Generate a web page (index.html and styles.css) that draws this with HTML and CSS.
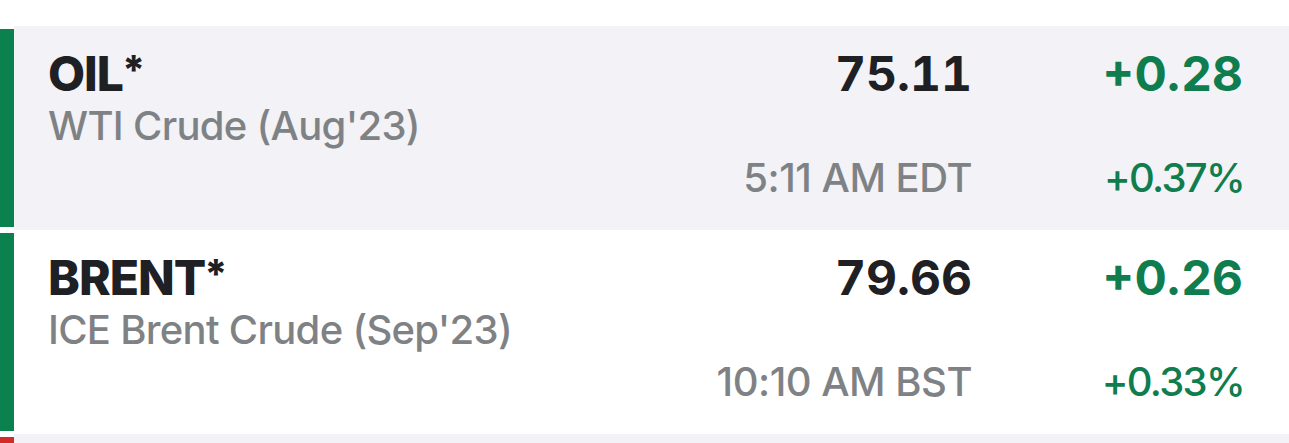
FILE: index.html
```html
<!DOCTYPE html>
<html>
<head>
<meta charset="utf-8">
<link rel="stylesheet" href="styles.css">
</head>
<body>
<div class="list">
  <div class="row row-alt">
    <div class="bar bar-up"></div>
    <div class="cell-name">
      <div class="symbol">OIL<span class="star">*</span></div>
      <div class="desc">WTI Crude (Aug'23)</div>
    </div>
    <div class="cell-price">
      <div class="price">75.11</div>
      <div class="time">5:11 AM EDT</div>
    </div>
    <div class="cell-change">
      <div class="change up">+0.28</div>
      <div class="pct up">+0.37%</div>
    </div>
  </div>
  <div class="row">
    <div class="bar bar-up"></div>
    <div class="cell-name">
      <div class="symbol">BRENT<span class="star">*</span></div>
      <div class="desc">ICE Brent Crude (Sep'23)</div>
    </div>
    <div class="cell-price">
      <div class="price">79.66</div>
      <div class="time">10:10 AM BST</div>
    </div>
    <div class="cell-change">
      <div class="change up">+0.26</div>
      <div class="pct up">+0.33%</div>
    </div>
  </div>
  <div class="row row-alt row-peek">
    <div class="bar bar-down"></div>
  </div>
</div>
</body>
</html>
```
FILE: styles.css
```css
html, body {
  margin: 0;
  padding: 0;
  background: #ffffff;
  overflow: hidden;
}
body {
  font-family: "Inter", "Liberation Sans", sans-serif;
  width: 1289px;
  height: 443px;
}
.list {
  padding-top: 26px;
  height: 417px;
  overflow: hidden;
}
.row {
  display: flex;
  height: 204px;
  background: #ffffff;
}
.row-peek {
  height: 9px;
}
.row-alt {
  background: linear-gradient(to right, #ffffff 14px, #f2f2f7 14px);
}
.bar {
  width: 14px;
  flex: none;
  margin: 3px 0;
}
.row-peek .bar {
  margin-bottom: 0;
}
.bar-up { background: #0b8150; }
.bar-down { background: #d32b2b; }
.cell-name {
  flex: 1;
  padding-left: 34px;
  padding-top: 22px;
}
.symbol {
  font-size: 48px;
  font-weight: 800;
  line-height: 52px;
  height: 52px;
  color: #1e2023;
  letter-spacing: -1px;
}
.star {
  font-size: 40px;
  line-height: 0;
  vertical-align: 7px;
  margin-left: -1px;
}
.desc {
  font-size: 40px;
  font-weight: 500;
  line-height: 52px;
  color: #7f8285;
  letter-spacing: -0.7px;
}
.cell-price {
  width: 300px;
  display: flex;
  flex-direction: column;
  align-items: flex-end;
  padding-top: 22px;
}
.price {
  font-size: 48px;
  font-weight: 700;
  line-height: 52px;
  color: #1e2023;
  font-variant-numeric: tabular-nums;
}
.time {
  margin-top: 52px;
  font-size: 40px;
  font-weight: 500;
  line-height: 52px;
  color: #7f8285;
  letter-spacing: -0.5px;
}
.cell-change {
  width: 271px;
  padding-right: 46px;
  display: flex;
  flex-direction: column;
  align-items: flex-end;
  padding-top: 22px;
}
.change {
  font-size: 48px;
  font-weight: 700;
  line-height: 52px;
}
.pct {
  margin-top: 52px;
  font-size: 40px;
  font-weight: 500;
  line-height: 52px;
  letter-spacing: -1.7px;
  margin-right: -1px;
}
.up { color: #0f7d4e; }
```
